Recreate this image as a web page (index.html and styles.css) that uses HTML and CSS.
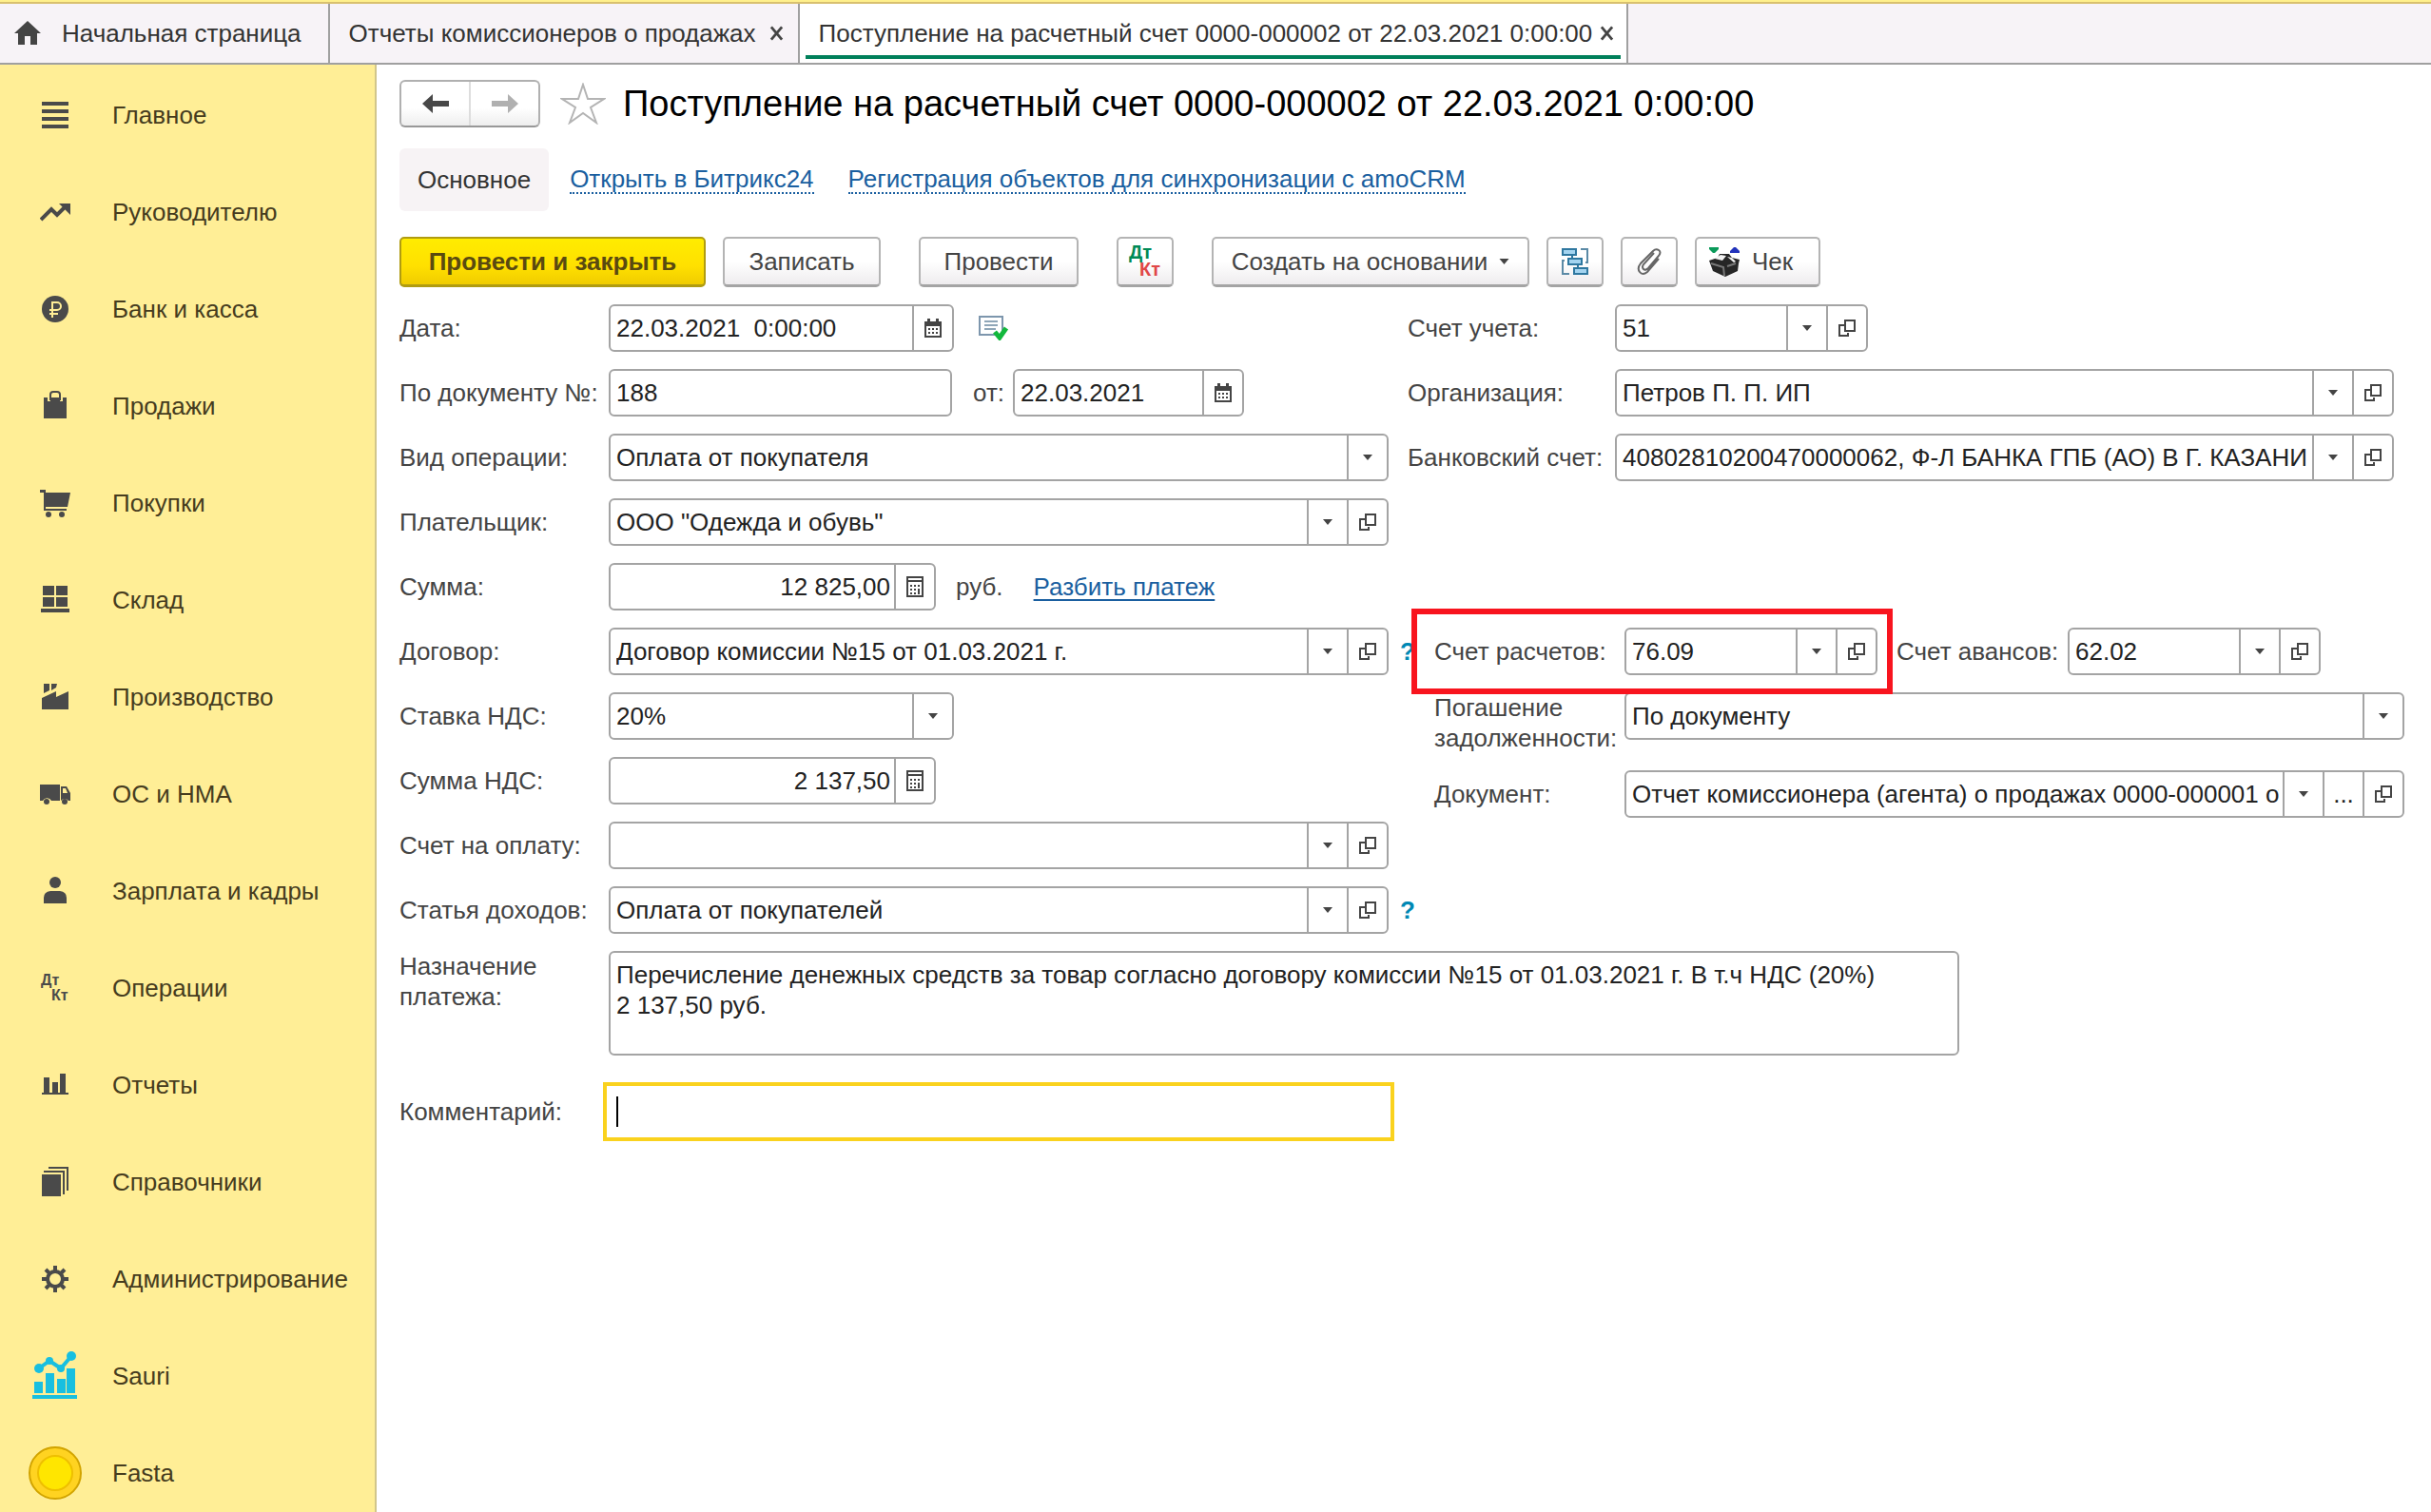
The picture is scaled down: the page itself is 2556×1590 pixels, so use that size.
FILE: index.html
```html
<!DOCTYPE html>
<html lang="ru">
<head>
<meta charset="utf-8">
<title>Поступление на расчетный счет</title>
<link rel="stylesheet" href="styles.css">
</head>
<body>
<svg class="sprite" aria-hidden="true">
  <symbol id="open" viewBox="0 0 18 18"><path d="M7 1h10v11H7z M6 6H1v11h9v-3" fill="none" stroke="#444" stroke-width="2"/></symbol>
  <symbol id="arrow" viewBox="0 0 10 6"><path d="M0 0h10L5 6z" fill="#444"/></symbol>
  <symbol id="calendar" viewBox="0 0 18 20"><path d="M0 3h3V0h3v3h6V0h3v3h3v17H0z" fill="#444"/><path d="M2 8h14v10H2z" fill="#fff"/><path d="M4 10h2v2H4zM8 10h2v2H8zM12 10h2v2h-2zM4 14h2v2H4zM8 14h2v2H8zM12 14h2v2h-2z" fill="#444"/></symbol>
  <symbol id="calc" viewBox="0 0 18 22"><path d="M1 1h16v20H1z" fill="none" stroke="#444" stroke-width="2"/><path d="M2 4h14v2H2zM4 9h2v2H4zM8 9h2v2H8zM12 9h2v2h-2zM4 13h2v2H4zM8 13h2v2H8zM12 13h2v6h-2zM4 17h2v2H4zM8 17h2v2H8z" fill="#444"/></symbol>
  <symbol id="close" viewBox="0 0 16 16"><path d="M2 1l12 14M14 1L2 15" stroke="#444" stroke-width="3" fill="none"/></symbol>
</svg>

<header class="tabs">
  <a class="tab tab-home" href="#"><svg width="28" height="26" viewBox="0 0 28 26"><path d="M14 0L0 13h4v12h7v-9h6v9h7V13h4z" fill="#444"/></svg><span>Начальная страница</span></a>
  <div class="tab"><a href="#">Отчеты комиссионеров о продажах</a><button class="tab-close" aria-label="Закрыть"><svg width="15" height="16"><use href="#close"/></svg></button></div>
  <div class="tab tab-active"><a href="#">Поступление на расчетный счет 0000-000002 от 22.03.2021 0:00:00</a><button class="tab-close" aria-label="Закрыть"><svg width="15" height="16"><use href="#close"/></svg></button></div>
</header>

<div class="shell">
<nav class="sidebar">
  <a href="#"><svg viewBox="0 0 32 32"><path d="M2 2h28v4H2zM2 10h28v4H2zM2 18h28v4H2zM2 26h28v4H2z"/></svg><span>Главное</span></a>
  <a href="#"><svg viewBox="0 0 32 32"><path d="M1 24L12 13l6 6 9-9" fill="none" stroke="#4a4a4a" stroke-width="4"/><path d="M20 7h12v12z"/></svg><span>Руководителю</span></a>
  <a href="#"><svg viewBox="0 0 32 32"><circle cx="16" cy="16" r="14"/><path d="M13 25V9h5a4 4 0 0 1 0 8h-8M10 21h9" fill="none" stroke="#ffee96" stroke-width="2"/></svg><span>Банк и касса</span></a>
  <a href="#"><svg viewBox="0 0 32 32"><path d="M4 7h4v4h3V7h10v4h3V7h4v22H4z"/><path d="M11 10V4q0-3 3-3h4q3 0 3 3v6" fill="none" stroke="#4a4a4a" stroke-width="2"/></svg><span>Продажи</span></a>
  <a href="#"><svg viewBox="0 0 32 32"><path d="M0 2h6v3h26l-3 15H6v2h22v2H4V5H0z"/><circle cx="9" cy="28" r="3"/><circle cx="23" cy="28" r="3"/></svg><span>Покупки</span></a>
  <a href="#"><svg viewBox="0 0 32 32"><path d="M3 1h12v10H3zM17 1h12v10H17zM3 13h12v10H3zM17 13h12v10H17zM1 25h30v4H1z"/></svg><span>Склад</span></a>
  <a href="#"><svg viewBox="0 0 32 32"><path d="M4 2h6v7l-6 3zM12 2h6l-1 4-5 3zM2 17l15-7v6l13-6v19H2z"/></svg><span>Производство</span></a>
  <a href="#"><svg viewBox="0 0 32 32"><path d="M0 6h21v17h-9a5 5 0 0 0-9 0H0zM22 8h6l4 7v8h-2a5 5 0 0 0-8 0zM24 10v5h5l-2-5z" fill-rule="evenodd"/><circle cx="7" cy="24" r="3"/><circle cx="26" cy="24" r="3"/></svg><span>ОС и НМА</span></a>
  <a href="#"><svg viewBox="0 0 32 32"><circle cx="16" cy="7" r="6"/><path d="M4 29v-6q0-6 7-7h10q7 1 7 7v6z"/></svg><span>Зарплата и кадры</span></a>
  <a href="#"><svg viewBox="0 0 32 32"><text x="1" y="13" class="mini">Дт</text><text x="12" y="29" class="mini">Кт</text></svg><span>Операции</span></a>
  <a href="#"><svg viewBox="0 0 32 32"><path d="M4 8h6v17H4zM13 13h6v11h-6zM21 4h6v20h-6zM2 24h28v2H2z"/></svg><span>Отчеты</span></a>
  <a href="#"><svg viewBox="0 0 32 32"><path d="M2 8h20v23H2zM4 4h22v25h-2V6H4zM9 0h21v25h-2V2H9z"/></svg><span>Справочники</span></a>
  <a href="#"><svg viewBox="0 0 32 32"><circle cx="16" cy="16" r="8" fill="none" stroke="#4a4a4a" stroke-width="4"/><path d="M16 2v6M16 24v6M2 16h6M24 16h6M6 6l5 5M21 21l5 5M26 6l-5 5M6 26l5-5" stroke="#4a4a4a" stroke-width="4"/></svg><span>Администрирование</span></a>
  <a href="#"><svg class="big" viewBox="0 0 58 58"><g fill="#18bfe0"><path d="M7 35h9v12H7zM19 26h9v21h-9zM31 32h9v15h-9zM41 21h9v26h-9zM5 49h47v4H5z"/><circle cx="12" cy="21" r="5"/><circle cx="23" cy="13" r="4"/><circle cx="35" cy="21" r="4"/><circle cx="46" cy="8" r="5"/></g><path d="M12 21l11-8 12 8 11-13" fill="none" stroke="#18bfe0" stroke-width="4"/></svg><span>Sauri</span></a>
  <a href="#"><svg class="big" viewBox="0 0 58 58"><circle cx="29" cy="29" r="27" fill="#ffd321" stroke="#d2a400" stroke-width="2"/><circle cx="29" cy="29" r="18" fill="#ffe600" stroke="#eebf00" stroke-width="2"/></svg><span>Fasta</span></a>
</nav>

<main>
  <div class="heading">
    <div class="history">
      <button aria-label="Назад"><svg width="28" height="22" viewBox="0 0 28 22"><path d="M0 11L11 1v7h17v6H11v7z" fill="#484848"/></svg></button>
      <button aria-label="Вперед"><svg width="28" height="22" viewBox="0 0 28 22"><path d="M28 11L17 1v7H0v6h17v7z" fill="#b0b0b0"/></svg></button>
    </div>
    <svg class="star" width="48" height="44" viewBox="0 0 48 44"><path d="M24 2l5 15h17L32 26l6 16-14-10-14 10 6-16L2 17h17z" fill="#fff" stroke="#b4b4b4" stroke-width="2"/></svg>
    <h1>Поступление на расчетный счет 0000-000002 от 22.03.2021 0:00:00</h1>
  </div>

  <div class="subnav">
    <span class="current">Основное</span>
    <a href="#">Открыть в Битрикс24</a>
    <a href="#">Регистрация объектов для синхронизации с amoCRM</a>
  </div>

  <div class="toolbar">
    <button class="btn primary">Провести и закрыть</button>
    <button class="btn save">Записать</button>
    <button class="btn post">Провести</button>
    <button class="btn icon spaced" aria-label="Дт Кт"><svg width="36" height="38" viewBox="0 0 36 38"><text x="1" y="16" class="dt">Дт</text><text x="12" y="34" class="kt">Кт</text></svg></button>
    <button class="btn create">Создать на основании<svg width="11" height="6"><use href="#arrow"/></svg></button>
    <button class="btn icon" aria-label="Структура"><svg width="30" height="30" viewBox="0 0 30 30"><path d="M2 2h14v6H2zM8 12h14v6H8zM14 22h14v6H14zM12 8v4M18 18v4" fill="#a4d4f0" stroke="#2f78a0" stroke-width="2"/><path d="M21 2h7v14h-2M9 28H2V14h2" fill="none" stroke="#5b8aa6" stroke-width="2"/></svg></button>
    <button class="btn icon" aria-label="Файлы"><svg width="28" height="30" viewBox="0 0 28 30"><path d="M19 6L8 18q-2 3 0 5t5-1l11-13q3-4 0-6t-6 1L5 17q-4 5-1 9t8 0l12-14" fill="none" stroke="#666" stroke-width="2"/></svg></button>
    <button class="btn check"><svg width="34" height="34" viewBox="0 0 34 34"><path d="M1 2h10v2L7 8H5L1 4z" fill="#0a9a5a"/><path d="M23 8h10V6l-4-4h-2l-4 4z" fill="#2233bb"/><path d="M1 16l9-3 2-4h10l3 4 8 2-1 4-1 8-13 6-13-6z" fill="#262626"/><path d="M7 14l6-4 6 1-4 5zM20 12l5 1 4 4-2 1z" fill="#f2f2f2"/><path d="M3 19l13 4 1 9M20 22l9-3" fill="none" stroke="#777" stroke-width="2"/></svg>Чек</button>
  </div>

  <form>
    <div class="columns">
      <div class="rows">
        <div class="row"><label for="date">Дата:</label>
          <div class="field w-date"><input id="date" value="22.03.2021  0:00:00"><button type="button" aria-label="Календарь"><svg width="18" height="20"><use href="#calendar"/></svg></button></div>
          <svg class="posted" width="32" height="26" viewBox="0 0 32 26"><path d="M1 1h24v19H1z" fill="#fff" stroke="#7d96ad" stroke-width="2"/><path d="M6 6h14M6 10h14M6 14h12" stroke="#8fa6b8" stroke-width="2"/><path d="M17 17l5 6 7-10" fill="none" stroke="#12b83c" stroke-width="5"/></svg>
        </div>
        <div class="row"><label for="num">По документу №:</label>
          <div class="field w-num"><input id="num" value="188"></div>
          <label class="from" for="numdate">от:</label>
          <div class="field w-numdate"><input id="numdate" value="22.03.2021"><button type="button" aria-label="Календарь"><svg width="18" height="20"><use href="#calendar"/></svg></button></div>
        </div>
        <div class="row"><label for="kind">Вид операции:</label>
          <div class="field grow"><select id="kind"><option>Оплата от покупателя</option></select><span class="drop"><svg width="10" height="6"><use href="#arrow"/></svg></span></div>
        </div>
        <div class="row"><label for="payer">Плательщик:</label>
          <div class="field grow"><input id="payer" value="ООО &quot;Одежда и обувь&quot;"><button type="button" aria-label="Выбрать"><svg width="10" height="6"><use href="#arrow"/></svg></button><button type="button" aria-label="Открыть"><svg width="18" height="18"><use href="#open"/></svg></button></div>
        </div>
        <div class="row"><label for="sum">Сумма:</label>
          <div class="field w-sum"><input class="num" id="sum" value="12 825,00"><button type="button" aria-label="Калькулятор"><svg width="18" height="22"><use href="#calc"/></svg></button></div>
          <span class="unit">руб.</span><a class="split" href="#">Разбить платеж</a>
        </div>
        <div class="row"><label for="contract">Договор:</label>
          <div class="field grow"><input id="contract" value="Договор комиссии №15 от 01.03.2021 г."><button type="button" aria-label="Выбрать"><svg width="10" height="6"><use href="#arrow"/></svg></button><button type="button" aria-label="Открыть"><svg width="18" height="18"><use href="#open"/></svg></button></div>
          <a class="help" href="#">?</a>
        </div>
        <div class="row"><label for="vat">Ставка НДС:</label>
          <div class="field w-date"><select id="vat"><option>20%</option></select><span class="drop"><svg width="10" height="6"><use href="#arrow"/></svg></span></div>
        </div>
        <div class="row"><label for="vatsum">Сумма НДС:</label>
          <div class="field w-sum"><input class="num" id="vatsum" value="2 137,50"><button type="button" aria-label="Калькулятор"><svg width="18" height="22"><use href="#calc"/></svg></button></div>
        </div>
        <div class="row"><label for="invoice">Счет на оплату:</label>
          <div class="field grow"><input id="invoice"><button type="button" aria-label="Выбрать"><svg width="10" height="6"><use href="#arrow"/></svg></button><button type="button" aria-label="Открыть"><svg width="18" height="18"><use href="#open"/></svg></button></div>
        </div>
        <div class="row"><label for="income">Статья доходов:</label>
          <div class="field grow"><input id="income" value="Оплата от покупателей"><button type="button" aria-label="Выбрать"><svg width="10" height="6"><use href="#arrow"/></svg></button><button type="button" aria-label="Открыть"><svg width="18" height="18"><use href="#open"/></svg></button></div>
          <a class="help" href="#">?</a>
        </div>
      </div>

      <div class="side">
        <div class="rows org">
          <div class="row"><label for="account">Счет учета:</label>
            <div class="field w-acc"><input id="account" value="51"><button type="button" aria-label="Выбрать"><svg width="10" height="6"><use href="#arrow"/></svg></button><button type="button" aria-label="Открыть"><svg width="18" height="18"><use href="#open"/></svg></button></div>
          </div>
          <div class="row"><label for="org">Организация:</label>
            <div class="field grow"><input id="org" value="Петров П. П. ИП"><button type="button" aria-label="Выбрать"><svg width="10" height="6"><use href="#arrow"/></svg></button><button type="button" aria-label="Открыть"><svg width="18" height="18"><use href="#open"/></svg></button></div>
          </div>
          <div class="row"><label for="bank">Банковский счет:</label>
            <div class="field grow"><input id="bank" value="40802810200470000062, Ф-Л БАНКА ГПБ (АО) В Г. КАЗАНИ"><button type="button" aria-label="Выбрать"><svg width="10" height="6"><use href="#arrow"/></svg></button><button type="button" aria-label="Открыть"><svg width="18" height="18"><use href="#open"/></svg></button></div>
          </div>
        </div>
        <div class="rows settle">
          <div class="row">
            <div class="marked"><label for="settle">Счет расчетов:</label>
              <div class="field w-acc"><input id="settle" value="76.09"><button type="button" aria-label="Выбрать"><svg width="10" height="6"><use href="#arrow"/></svg></button><button type="button" aria-label="Открыть"><svg width="18" height="18"><use href="#open"/></svg></button></div></div>
            <label class="advance" for="advance">Счет авансов:</label>
            <div class="field w-acc"><input id="advance" value="62.02"><button type="button" aria-label="Выбрать"><svg width="10" height="6"><use href="#arrow"/></svg></button><button type="button" aria-label="Открыть"><svg width="18" height="18"><use href="#open"/></svg></button></div>
          </div>
          <div class="row top"><label for="debt">Погашение задолженности:</label>
            <div class="field grow"><select id="debt"><option>По документу</option></select><span class="drop"><svg width="10" height="6"><use href="#arrow"/></svg></span></div>
          </div>
          <div class="row"><label for="doc">Документ:</label>
            <div class="field grow"><input id="doc" value="Отчет комиссионера (агента) о продажах 0000-000001 от 22.03.2021"><button type="button" aria-label="Выбрать"><svg width="10" height="6"><use href="#arrow"/></svg></button><button type="button">...</button><button type="button" aria-label="Открыть"><svg width="18" height="18"><use href="#open"/></svg></button></div>
          </div>
        </div>
      </div>
    </div>

    <div class="row top purpose"><label for="purpose">Назначение платежа:</label><textarea id="purpose">Перечисление денежных средств за товар согласно договору комиссии №15 от 01.03.2021 г. В т.ч НДС (20%)
2 137,50 руб.</textarea></div>
    <div class="row comment"><label for="comment">Комментарий:</label><div class="focus"><input id="comment"></div></div>
  </form>
</main>
</div>
</body>
</html>
```
FILE: styles.css
```css
* { box-sizing: border-box; }
body {
  margin: 0;
  min-height: 100vh;
  display: flex;
  flex-direction: column;
  background: #fff;
  color: #444;
  font: 26px/32px "Liberation Sans", Arial, sans-serif;
}
button, input, select, textarea { font: inherit; color: inherit; margin: 0; }
button { padding: 0; cursor: pointer; }
a { color: inherit; text-decoration: none; }
svg { flex: none; }
.sprite { position: absolute; width: 0; height: 0; }

/* Open windows */
.tabs {
  display: flex;
  height: 68px;
  padding-top: 4px;
  border-bottom: 2px solid #a0a0a0;
  background: linear-gradient(#fff08c 0 2px, #d8c070 2px 4px, #f7f3f7 4px);
  color: #333;
}
.tab {
  position: relative;
  display: flex;
  align-items: center;
  padding: 0 15px 0 20px;
  gap: 14px;
  border-right: 2px solid #a0a0a0;
  white-space: nowrap;
}
.tab-home { padding: 0 28px 0 15px; gap: 22px; }
.tab-active { padding-right: 13px; gap: 8px; background: #fff; }
.tab-active::after {
  content: "";
  position: absolute;
  left: 6px; right: 6px; bottom: 4px;
  height: 4px;
  background: #00805a;
}
.tab-close { display: flex; border: 0; background: none; }

.shell { display: flex; flex: 1; }

/* Sections */
.sidebar {
  flex: none;
  width: 396px;
  display: flex;
  flex-direction: column;
  gap: 36px;
  padding: 20px 0 0 28px;
  background: #ffee96;
  border-right: 2px solid #d2c68a;
  color: #463c1e;
}
.sidebar a { display: flex; align-items: center; height: 66px; gap: 44px; padding-left: 14px; }
.sidebar svg { width: 32px; height: 32px; fill: #4a4a4a; }
.sidebar svg.big { width: 58px; height: 58px; margin: 0 -13px; }
.mini { font: bold 16px "Liberation Sans", Arial, sans-serif; }

main { flex: 1; min-width: 0; padding: 16px 28px 24px 24px; }

.heading { display: flex; align-items: center; height: 50px; }
.history { display: flex; width: 148px; height: 50px; border: 2px solid #b0b0b0; border-bottom-color: #989898; border-radius: 6px; background: linear-gradient(#fff 60%, #eee); }
.history button { flex: 1; display: flex; align-items: center; justify-content: center; border: 0; background: none; }
.history button + button { border-left: 2px solid #ddd; }
.star { margin: 0 18px 0 21px; }
h1 { margin: 0; font-size: 38px; line-height: 48px; font-weight: normal; color: #000; white-space: nowrap; }

.subnav { display: flex; align-items: center; margin-top: 22px; gap: 0 36px; white-space: nowrap; }
.subnav a { color: #1a5fa0; border-bottom: 2px dotted #1a5fa0; line-height: 28px; }
.current { padding: 17px 19px; margin-right: -14px; border-radius: 6px; background: #f7f3f5; color: #333; }

.toolbar { display: flex; margin-top: 27px; gap: 18px; }
.btn {
  display: flex;
  align-items: center;
  justify-content: center;
  height: 53px;
  border: 2px solid #b4b4b4;
  border-bottom: 3px solid #a4a4a4;
  border-radius: 5px;
  background: linear-gradient(#fff 50%, #eeecee);
  white-space: nowrap;
}
.primary { width: 322px; border-color: #b09c10; background: linear-gradient(#ffec00, #ffe000 60%, #f0cc00); font-weight: bold; color: #5a4a10; }
.save { width: 166px; }
.post { width: 168px; margin-left: 22px; }
.icon { width: 60px; }
.spaced { margin: 0 22px; }
.create { width: 334px; gap: 12px; }
.check { width: 132px; gap: 12px; justify-content: flex-start; padding-left: 12px; }
.dt, .kt { font: bold 20px "Liberation Sans", Arial, sans-serif; fill: #008a56; }
.kt { fill: #e04848; }

/* Document fields */
form { margin-top: 18px; }
.columns { display: grid; grid-template-columns: minmax(0, 1040fr) minmax(0, 1048fr); gap: 20px; }
.rows { display: flex; flex-direction: column; gap: 18px; }
.row { display: flex; align-items: center; }
.row > label, .marked > label { flex: none; width: 220px; white-space: nowrap; }
.field {
  position: relative;
  display: flex;
  flex: none;
  height: 50px;
  border: 2px solid #a4a4a4;
  border-radius: 6px;
  background: #fff;
  color: #222;
}
.grow { flex: 1; min-width: 0; }
.field input, .field select {
  flex: 1;
  min-width: 0;
  width: 100%;
  padding: 0 4px 0 6px;
  border: 0;
  outline: 0;
  background: none;
  white-space: pre;
}
.field select { appearance: none; }
.field .num { text-align: right; }
.field button, .drop {
  flex: none;
  width: 42px;
  display: flex;
  align-items: center;
  justify-content: center;
  border: 0;
  border-left: 2px solid #a4a4a4;
  background: none;
}
.drop { pointer-events: none; }
.w-date { width: 363px; }
.w-num { width: 361px; }
.w-numdate { width: 243px; }
.w-sum { width: 344px; }
.w-acc { width: 266px; }
.row > .from { width: auto; margin: 0 9px 0 22px; }
.posted { margin-left: 26px; }
.unit { margin-left: 21px; }
.split { margin-left: 32px; color: #1a5fa0; text-decoration: underline; text-underline-offset: 4px; text-decoration-thickness: 2px; }
.help { width: 14px; margin: 0 -26px 0 12px; color: #0088b4; font-weight: bold; }

.org { margin-right: 11px; }
.org .row > label { width: 218px; }
.settle { margin: 154px 0 0 28px; }
.settle .row > label, .marked > label { width: 200px; }
.marked { position: relative; display: flex; align-items: center; }
.marked::after {
  content: "";
  position: absolute;
  inset: -20px -16px -20px -24px;
  border: 6px solid #f8141e;
  pointer-events: none;
  z-index: 1;
}
.settle .row > .advance { width: 180px; margin-left: 20px; }
.row.top { align-items: flex-start; }
.row.top > label { white-space: normal; }
.settle .top { height: 64px; }

.purpose { margin-top: 18px; }
textarea {
  flex: 0 1 1420px;
  height: 110px;
  padding: 7px 6px;
  border: 2px solid #a4a4a4;
  border-radius: 6px;
  color: #222;
  resize: none;
  overflow: hidden;
}
.comment { margin-top: 28px; }
.row.comment > label { width: 214px; }
.focus { position: relative; width: 832px; }
.focus input { display: block; width: 100%; height: 62px; padding: 0 10px; border: 4px solid #fad21e; outline: 0; }
.focus::after { content: ""; position: absolute; left: 14px; top: 15px; width: 2px; height: 32px; background: #000; }
```
